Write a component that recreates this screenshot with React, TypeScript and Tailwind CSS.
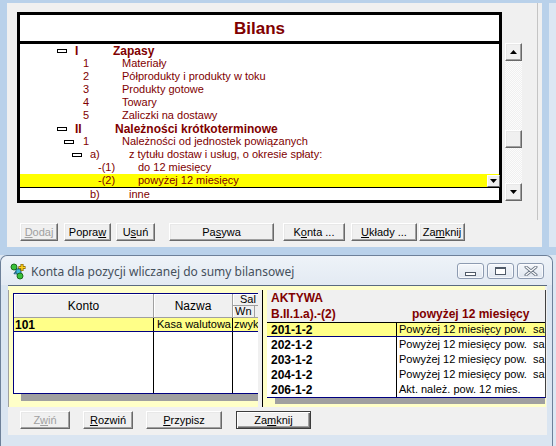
import React from "react";

type Row = {
  pre: string;
  minus?: boolean;
  code: string;
  text: string;
  bold?: boolean;
  selected?: boolean;
};

const rows: Row[] = [
  { pre: "w-[93px] pl-[37px] gap-[8px]", minus: true, code: "I", text: "Zapasy", bold: true },
  { pre: "w-[102px] pl-[63px]", code: "1", text: "Materiały" },
  { pre: "w-[102px] pl-[63px]", code: "2", text: "Półprodukty i produkty w toku" },
  { pre: "w-[102px] pl-[63px]", code: "3", text: "Produkty gotowe" },
  { pre: "w-[102px] pl-[63px]", code: "4", text: "Towary" },
  { pre: "w-[102px] pl-[63px]", code: "5", text: "Zaliczki na dostawy" },
  { pre: "w-[95px] pl-[37px] gap-[8px]", minus: true, code: "II", text: "Należności krótkoterminowe", bold: true },
  { pre: "w-[102px] pl-[44px] gap-[9px]", minus: true, code: "1", text: "Należności od jednostek powiązanych" },
  { pre: "w-[109px] pl-[52px] gap-[8px]", minus: true, code: "a)", text: "z tytułu dostaw i usług, o okresie spłaty:" },
  { pre: "w-[118px] pl-[78px]", code: "-(1)", text: "do 12 miesięcy" },
  { pre: "w-[118px] pl-[78px]", code: "-(2)", text: "powyżej 12 miesięcy", selected: true },
  { pre: "w-[109px] pl-[70px]", code: "b)", text: "inne" },
];

const right = [
  { k: "202-1-2", n: "Powyżej 12 miesięcy pow.", s: "sa" },
  { k: "203-1-2", n: "Powyżej 12 miesięcy pow.", s: "sa" },
  { k: "204-1-2", n: "Powyżej 12 miesięcy pow.", s: "sa" },
  { k: "206-1-2", n: "Akt. należ. pow. 12 mies.", s: "" },
];

const btn =
  "h-[18px] flex items-center justify-center bg-[#f0f0f0] border border-t-white border-l-white border-b-[#696969] border-r-[#696969] shadow-[inset_-1px_-1px_0_#a0a0a0,inset_1px_1px_0_#e8e8e8]";

function Btn({ w, pre, u, post, disabled, def }: { w: string; pre: string; u: string; post: string; disabled?: boolean; def?: boolean }) {
  const base = def
    ? "h-[18px] flex items-center justify-center bg-[#f0f0f0] border border-[#3c3c3c] shadow-[inset_1px_1px_0_#fff,inset_-1px_-1px_0_#696969,inset_-2px_-2px_0_#a0a0a0]"
    : btn;
  return (
    <div className={`${base} ${w} ${disabled ? "text-[#a0a0a0]" : "text-black"}`}>
      <span>
        {pre}
        <span className="underline underline-offset-[1px]">{u}</span>
        {post}
      </span>
    </div>
  );
}

function Minus() {
  return <span className="w-[10px] h-[4px] border border-black bg-white shrink-0" />;
}

function Arrow({ up }: { up?: boolean }) {
  return (
    <svg width="7" height="4" viewBox="0 0 7 4">
      {up ? <polygon points="3.5,0 7,4 0,4" fill="#000" /> : <polygon points="0,0 7,0 3.5,4" fill="#000" />}
    </svg>
  );
}

function TopWindow() {
  return (
    <div className="h-[255px] shrink-0 flex bg-[#b9d1ea] pl-[7px] pt-[3px] pb-[8px]">
      <div className="w-[535px] h-[244px] bg-[#f0f0f0] flex">
        <div className="w-[530px] flex flex-col pl-[10px] pt-[9px]">
          <div className="flex">
            <div className="w-[485px] h-[191px] border-[3px] border-black bg-white flex flex-col">
              <div className="h-[26px] shrink-0 flex items-center justify-center border-b-[3px] border-black box-content">
                <span className="text-[17px] font-bold text-[#800000]">Bilans</span>
              </div>
              <div className="flex flex-col">
                {rows.map((r, i) => (
                  <div
                    key={i}
                    className={`h-[13px] flex items-center text-[#800000] ${
                      r.selected ? "bg-[#ffff00] border-b border-black h-[12px] box-content" : ""
                    }`}
                  >
                    <div className={`${r.pre} shrink-0 flex items-center`}>
                      {r.minus && <Minus />}
                      <span className={r.bold ? "text-[12px] font-bold" : ""}>{r.code}</span>
                    </div>
                    <span className={`flex-1 ${r.bold ? "text-[12px] font-bold" : ""}`}>{r.text}</span>
                    {r.selected && (
                      <div className="w-[13px] h-[12px] mr-[-1px] flex items-center justify-center bg-[#f0f0f0] border border-t-white border-l-white border-b-[#696969] border-r-[#696969]">
                        <Arrow />
                      </div>
                    )}
                  </div>
                ))}
              </div>
            </div>
            <div className="ml-[3px] mt-[31px] w-[17px] h-[158px] flex flex-col bg-[repeating-conic-gradient(#f0f0f0_0_25%,#fcfcfc_0_50%)] bg-[length:2px_2px]">
              <div className={`${btn} w-[17px] h-[17px]`}>
                <Arrow up />
              </div>
              <div className="h-[69px]" />
              <div className={`${btn} w-[17px] h-[16px]`} />
              <div className="flex-1" />
              <div className={`${btn} w-[17px] h-[17px]`}>
                <Arrow />
              </div>
            </div>
          </div>
          <div className="flex mt-[20px] ml-[3px]">
            <Btn w="w-[38px]" pre="" u="D" post="odaj" disabled />
            <div className="ml-[6px]">
              <Btn w="w-[47px]" pre="Popra" u="w" post="" />
            </div>
            <div className="ml-[5px]">
              <Btn w="w-[39px]" pre="U" u="s" post="uń" />
            </div>
            <div className="ml-[14px]">
              <Btn w="w-[105px]" pre="Pa" u="s" post="ywa" />
            </div>
            <div className="ml-[9px]">
              <Btn w="w-[62px]" pre="K" u="o" post="nta ..." />
            </div>
            <div className="ml-[6px]">
              <Btn w="w-[66px]" pre="" u="U" post="kłady ..." />
            </div>
            <div className="ml-[2px]">
              <Btn w="w-[46px]" pre="Za" u="m" post="knij" />
            </div>
          </div>
        </div>
        <div className="w-px h-[217px] bg-[#c4c4c4]" />
      </div>
      <div className="w-[7px]" />
      <div className="flex-1 bg-[#dce7f3]" />
    </div>
  );
}

function TitleIcon() {
  return (
    <svg width="17" height="17" viewBox="0 0 17 17">
      <path d="M4 4 L10 10 M10 4 L4 11" stroke="#2a6a8a" strokeWidth="1.5" />
      <rect x="6" y="6" width="5" height="5" fill="#3fb8d8" stroke="#1d5f7a" />
      <circle cx="4" cy="4" r="3" fill="#39c23a" stroke="#1c6b1c" />
      <circle cx="10" cy="13" r="3" fill="#39c23a" stroke="#1c6b1c" />
      <path d="M12 1 V8 M8.5 4.5 H15.5" stroke="#7a5a00" strokeWidth="3" />
      <path d="M12 1.5 V7.5 M9 4.5 H15" stroke="#ffd21e" strokeWidth="1.5" />
    </svg>
  );
}

function WinBtn({ children }: { children: React.ReactNode }) {
  return (
    <div className="w-[27px] h-[16px] rounded-[3px] border border-[#8d9bb1] bg-[linear-gradient(#f4f7fb,#dfe6ef)] shadow-[inset_0_0_0_1px_#ffffffaa] flex items-center justify-center">
      {children}
    </div>
  );
}

function BottomWindow() {
  return (
    <div className="w-[553px] h-[191px] shrink-0 flex flex-col bg-[#dae5f1] border border-b-0 border-[#6d8099] rounded-t-[7px]">
      <div className="h-[29px] shrink-0 flex items-center bg-[linear-gradient(#eef3f8,#e3eaf3)] rounded-t-[7px]">
        <div className="ml-[9px] mt-[2px]">
          <TitleIcon />
        </div>
        <span className="ml-[4px] mt-[3px] text-[12px] text-[#45505c] font-['Noto_Sans',sans-serif]">
          Konta dla pozycji wliczanej do sumy bilansowej
        </span>
        <div className="ml-auto mr-[8px] flex gap-[3px] mt-[1px]">
          <WinBtn>
            <span className="w-[11px] h-[4px] mt-[6px] border border-[#505a68] bg-white" />
          </WinBtn>
          <WinBtn>
            <span className="w-[11px] h-[8px] border border-[#505a68] border-t-2 flex items-center justify-center bg-white" />
          </WinBtn>
          <WinBtn>
            <svg width="14" height="10" viewBox="0 0 14 10">
              <path d="M2 1 L12 9 M12 1 L2 9" stroke="#6b7685" strokeWidth="3" strokeLinecap="round" />
              <path d="M2 1 L12 9 M12 1 L2 9" stroke="#fff" strokeWidth="1.2" strokeLinecap="round" />
            </svg>
          </WinBtn>
        </div>
      </div>
      <div className="flex h-[150px] shrink-0">
        <div className="w-[7px] shrink-0" />
        <div className="w-[539px] shrink-0 flex flex-col bg-[#f0f0f0] border-t border-[#5a6a80]">
          <div className="h-[4px] bg-[#ffffc8] mr-[2px]" />
          <div className="h-[117px] flex">
            <div className="w-[250px] shrink-0 flex flex-col bg-[#ffffc8] border-l border-[#a0a0a0] pl-[4px] pt-[3px]">
              <div className="h-[101px] flex flex-col border-l border-t border-b border-[#000080] bg-white overflow-hidden">
                <div className="h-[24px] shrink-0 flex bg-[#f0f0f0] border-b border-[#a0a0a0]">
                  <div className="w-[140px] shrink-0 flex items-center justify-center border-r border-[#a0a0a0] shadow-[inset_1px_1px_0_#fff]">
                    <span className="text-[12px]">Konto</span>
                  </div>
                  <div className="w-[79px] shrink-0 flex items-center justify-center border-r border-[#a0a0a0] shadow-[inset_1px_1px_0_#fff]">
                    <span className="text-[12px]">Nazwa</span>
                  </div>
                  <div className="flex-1 min-w-0 flex flex-col shadow-[inset_1px_1px_0_#fff]">
                    <div className="h-[12px] flex items-center pl-[7px] border-b border-[#a0a0a0]">
                      <span>Sal</span>
                    </div>
                    <div className="flex-1 flex">
                      <div className="w-[22px] shrink-0 flex items-center pl-[2px] border-r border-[#a0a0a0]">
                        <span>Wn</span>
                      </div>
                    </div>
                  </div>
                </div>
                <div className="h-[13px] shrink-0 flex bg-[#ffff88] border-b border-[#000080] box-content">
                  <div className="w-[140px] shrink-0 flex items-center pl-[1px] border-r border-black">
                    <span className="text-[12px] font-bold">101</span>
                  </div>
                  <div className="w-[79px] shrink-0 flex items-center pl-[3px] border-r border-black whitespace-nowrap">
                    <span>Kasa walutowa</span>
                  </div>
                  <div className="flex-1 min-w-0 flex items-center pl-[1px] whitespace-nowrap">
                    <span>zwyk</span>
                  </div>
                </div>
                <div className="flex-1 flex">
                  <div className="w-[140px] shrink-0 border-r border-black" />
                  <div className="w-[79px] shrink-0 border-r border-black" />
                </div>
              </div>
              <div className="ml-[8px] h-[7px] bg-[#a0a0a0]" />
            </div>
            <div className="w-[4px] shrink-0 bg-[#f0f0f0]" />
            <div className="w-[284px] shrink-0 flex flex-col bg-[#ffffc8] border-l border-black pl-[4px]">
              <div className="h-[108px] flex flex-col bg-white border-r border-[#404040] border-b border-b-[#000080] overflow-hidden">
                <div className="h-[33px] shrink-0 flex flex-col bg-[#f0f0f0] border-b border-black pl-[4px] text-[12px] font-bold text-[#800000]">
                  <div className="h-[14px] mt-[1px] flex items-center">AKTYWA</div>
                  <div className="h-[17px] flex items-center">
                    <span className="w-[141px] shrink-0">B.II.1.a).-(2)</span>
                    <span>powyżej 12 miesięcy</span>
                  </div>
                </div>
                <div className="h-[13px] shrink-0 flex bg-[#ffff88] border-b border-[#000080] box-content">
                  <div className="w-[130px] shrink-0 flex items-center pl-[4px] border-r border-black">
                    <span className="text-[12px] font-bold">201-1-2</span>
                  </div>
                  <div className="w-[136px] shrink-0 flex items-center pl-[2px] whitespace-nowrap">
                    <span>Powyżej 12 miesięcy pow.</span>
                  </div>
                  <div className="flex-1 min-w-0 flex items-center overflow-hidden">
                    <span>sa</span>
                  </div>
                </div>
                {right.map((r) => (
                  <div key={r.k} className="h-[15px] shrink-0 flex">
                    <div className="w-[130px] shrink-0 flex items-center pl-[4px] border-r border-black">
                      <span className="text-[12px] font-bold">{r.k}</span>
                    </div>
                    <div className="w-[136px] shrink-0 flex items-center pl-[2px] whitespace-nowrap">
                      <span>{r.n}</span>
                    </div>
                    <div className="flex-1 min-w-0 flex items-center overflow-hidden">
                      <span>{r.s}</span>
                    </div>
                  </div>
                ))}
              </div>
              <div className="ml-[8px] mr-[1px] h-[6px] bg-[#a0a0a0]" />
            </div>
          </div>
          <div className="h-[28px] flex items-start pt-[4px] pl-[12px]">
            <Btn w="w-[50px]" pre="Z" u="w" post="iń" disabled />
            <div className="ml-[13px]">
              <Btn w="w-[50px]" pre="" u="R" post="ozwiń" />
            </div>
            <div className="ml-[13px]">
              <Btn w="w-[76px]" pre="" u="P" post="rzypisz" />
            </div>
            <div className="ml-[14px]">
              <Btn w="w-[75px]" pre="Za" u="m" post="knij" def />
            </div>
          </div>
        </div>
      </div>
    </div>
  );
}

export default function App() {
  return (
    <div className="w-[556px] h-[446px] overflow-hidden flex flex-col bg-[#dce7f3] font-['Liberation_Sans',Arial,sans-serif] text-[11px] text-black leading-none">
      <TopWindow />
      <BottomWindow />
    </div>
  );
}
